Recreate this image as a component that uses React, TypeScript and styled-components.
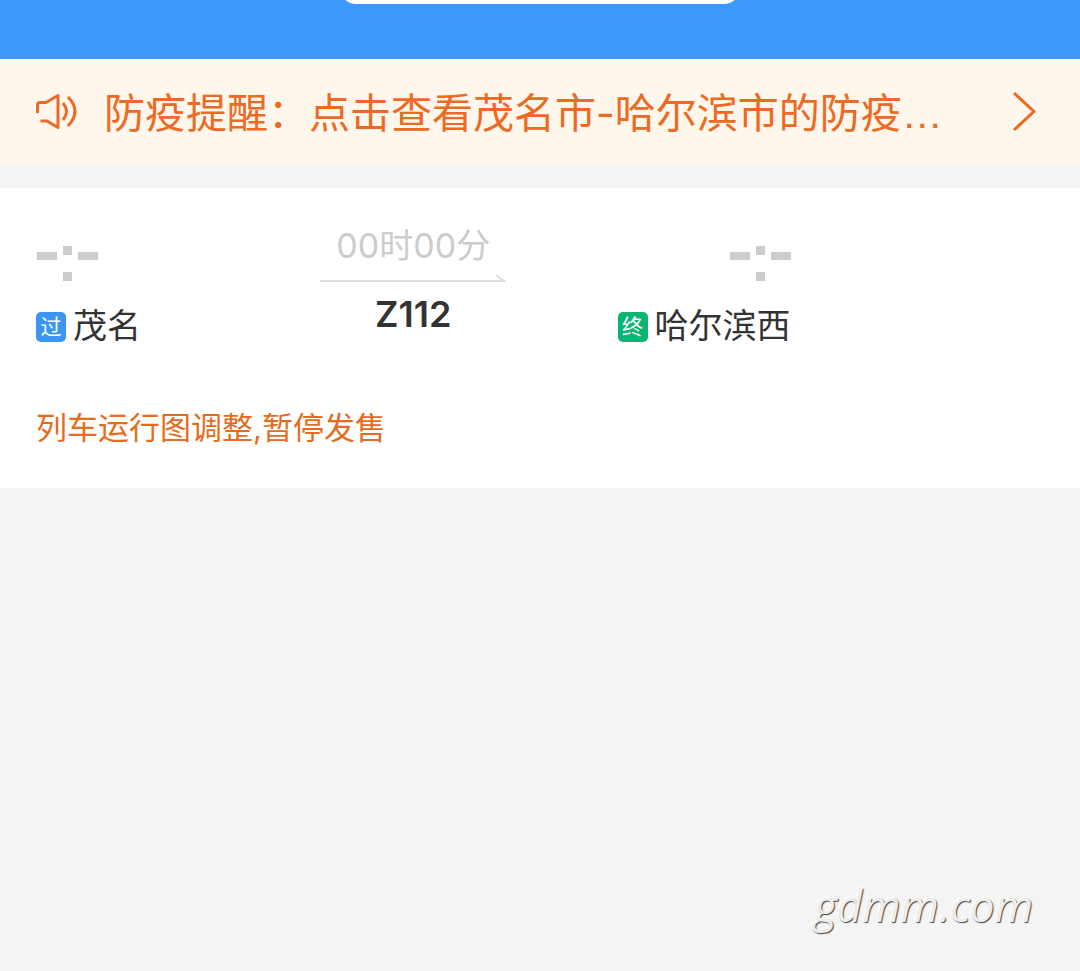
import React from 'react';
import styled, { createGlobalStyle } from 'styled-components';

const GlobalStyle = createGlobalStyle`
  *, *::before, *::after { box-sizing: border-box; }
  html { background: #f4f4f4; }
  body {
    margin: 0;
    font-family: 'Inter', 'Noto Sans CJK SC', sans-serif;
    color: #333;
  }
`;

const Page = styled.main`
  position: relative;
  display: flex;
  flex-direction: column;
  min-height: 100vh;
  overflow: hidden;
  background: #f4f4f4;
`;

const Header = styled.header`
  display: flex;
  justify-content: center;
  align-items: flex-start;
  height: 59px;
  overflow: hidden;
  background: #3c98fc;
`;

const DatePill = styled.div`
  width: 37%;
  height: 40px;
  margin-top: -36px;
  background: #fff;
  border-radius: 16px;
`;

const Notice = styled.a`
  display: flex;
  align-items: center;
  height: 105px;
  padding: 0 42px 0 34px;
  background: #fff7eb;
  color: #ec6a24;
  text-decoration: none;
`;

const NoticeText = styled.span`
  flex: 1;
  margin-left: 26px;
  padding-top: 4px;
  font-size: 41px;
  line-height: 60px;
  white-space: nowrap;
`;

const Ellipsis = styled.span`
  font-family: 'Liberation Sans', sans-serif;
`;

const Card = styled.section`
  margin-top: 24px;
  padding: 36px 38px 36px 36px;
  background: #fff;
`;

const Journey = styled.div`
  display: grid;
  grid-template-columns: 1fr 186px 1fr;
  width: 75%;
`;

const Stop = styled.div<{ $end?: boolean }>`
  display: flex;
  flex-direction: column;
  align-items: ${(p) => (p.$end ? 'flex-end' : 'flex-start')};
  padding-top: 20px;
`;

const Station = styled.div`
  display: flex;
  align-items: center;
  gap: 7px;
  margin-top: 20px;
  font-size: 34px;
  line-height: 48px;
  white-space: nowrap;
`;

const Badge = styled.span<{ $color: string }>`
  width: 30px;
  height: 30px;
  margin-top: 2px;
  border-radius: 5px;
  background: ${(p) => p.$color};
  color: #fff;
  font-size: 21px;
  line-height: 30px;
  text-align: center;
`;

const Middle = styled.div`
  display: flex;
  flex-direction: column;
  align-items: center;
`;

const Duration = styled.div`
  color: #ccc;
  font-size: 34px;
  line-height: 44px;
  white-space: nowrap;
`;

const TrainNo = styled.div`
  margin-top: 6px;
  font-size: 36px;
  font-weight: 600;
  line-height: 44px;
`;

const Status = styled.p`
  margin: 54px 0 0;
  color: #e56c1c;
  font-size: 31px;
  line-height: 48px;
`;

const Watermark = styled.div`
  position: absolute;
  right: 47px;
  bottom: 36px;
  color: #ededed;
  font-family: 'Open Sans', sans-serif;
  font-size: 44px;
  font-style: italic;
  line-height: 60px;
  text-shadow: 1px 1px 1px #444, -1px -1px 0 #fff;
`;

const EmptyTime = () => (
  <svg width="62" height="38" viewBox="0 0 62 38" fill="#ccc" role="img" aria-label="-:-">
    <rect x="1" y="8" width="20" height="8" />
    <rect x="27" y="2" width="9" height="9" />
    <rect x="27" y="28" width="9" height="9" />
    <rect x="42" y="8" width="20" height="8" />
  </svg>
);

const Speaker = () => (
  <svg width="44" height="40" viewBox="0 0 44 40" fill="none" stroke="currentColor" strokeWidth="3" aria-hidden="true">
    <path d="M3.500 21V13Q3.500 10.500 6 10.500H12L24 3.500V35.500L13 29H6.500" strokeLinejoin="round" />
    <path d="M29 11Q36 19.500 29 28" />
    <path d="M34 5Q48 19 34 34" />
  </svg>
);

const Chevron = () => (
  <svg width="26" height="42" viewBox="0 0 26 42" fill="none" stroke="currentColor" strokeWidth="3" aria-hidden="true">
    <path d="M2 2L22 20.500L2 39" strokeLinejoin="round" />
  </svg>
);

const Arrow = () => (
  <svg width="186" height="18" viewBox="0 0 186 18" fill="none" stroke="#ddd" strokeWidth="2" aria-hidden="true">
    <path d="M0 13H184L176 7" />
  </svg>
);

export default function App() {
  return (
    <>
      <GlobalStyle />
      <Page>
        <Header>
          <DatePill />
        </Header>
        <Notice href="#notice">
          <Speaker />
          <NoticeText>
            防疫提醒：点击查看茂名市-哈尔滨市的防疫<Ellipsis>…</Ellipsis>
          </NoticeText>
          <Chevron />
        </Notice>
        <Card>
          <Journey>
            <Stop>
              <EmptyTime />
              <Station>
                <Badge $color="#3c94f4">过</Badge>
                茂名
              </Station>
            </Stop>
            <Middle>
              <Duration>00时00分</Duration>
              <Arrow />
              <TrainNo>Z112</TrainNo>
            </Middle>
            <Stop $end>
              <EmptyTime />
              <Station>
                <Badge $color="#0cb474">终</Badge>
                哈尔滨西
              </Station>
            </Stop>
          </Journey>
          <Status>列车运行图调整,暂停发售</Status>
        </Card>
        <Watermark>gdmm.com</Watermark>
      </Page>
    </>
  );
}
